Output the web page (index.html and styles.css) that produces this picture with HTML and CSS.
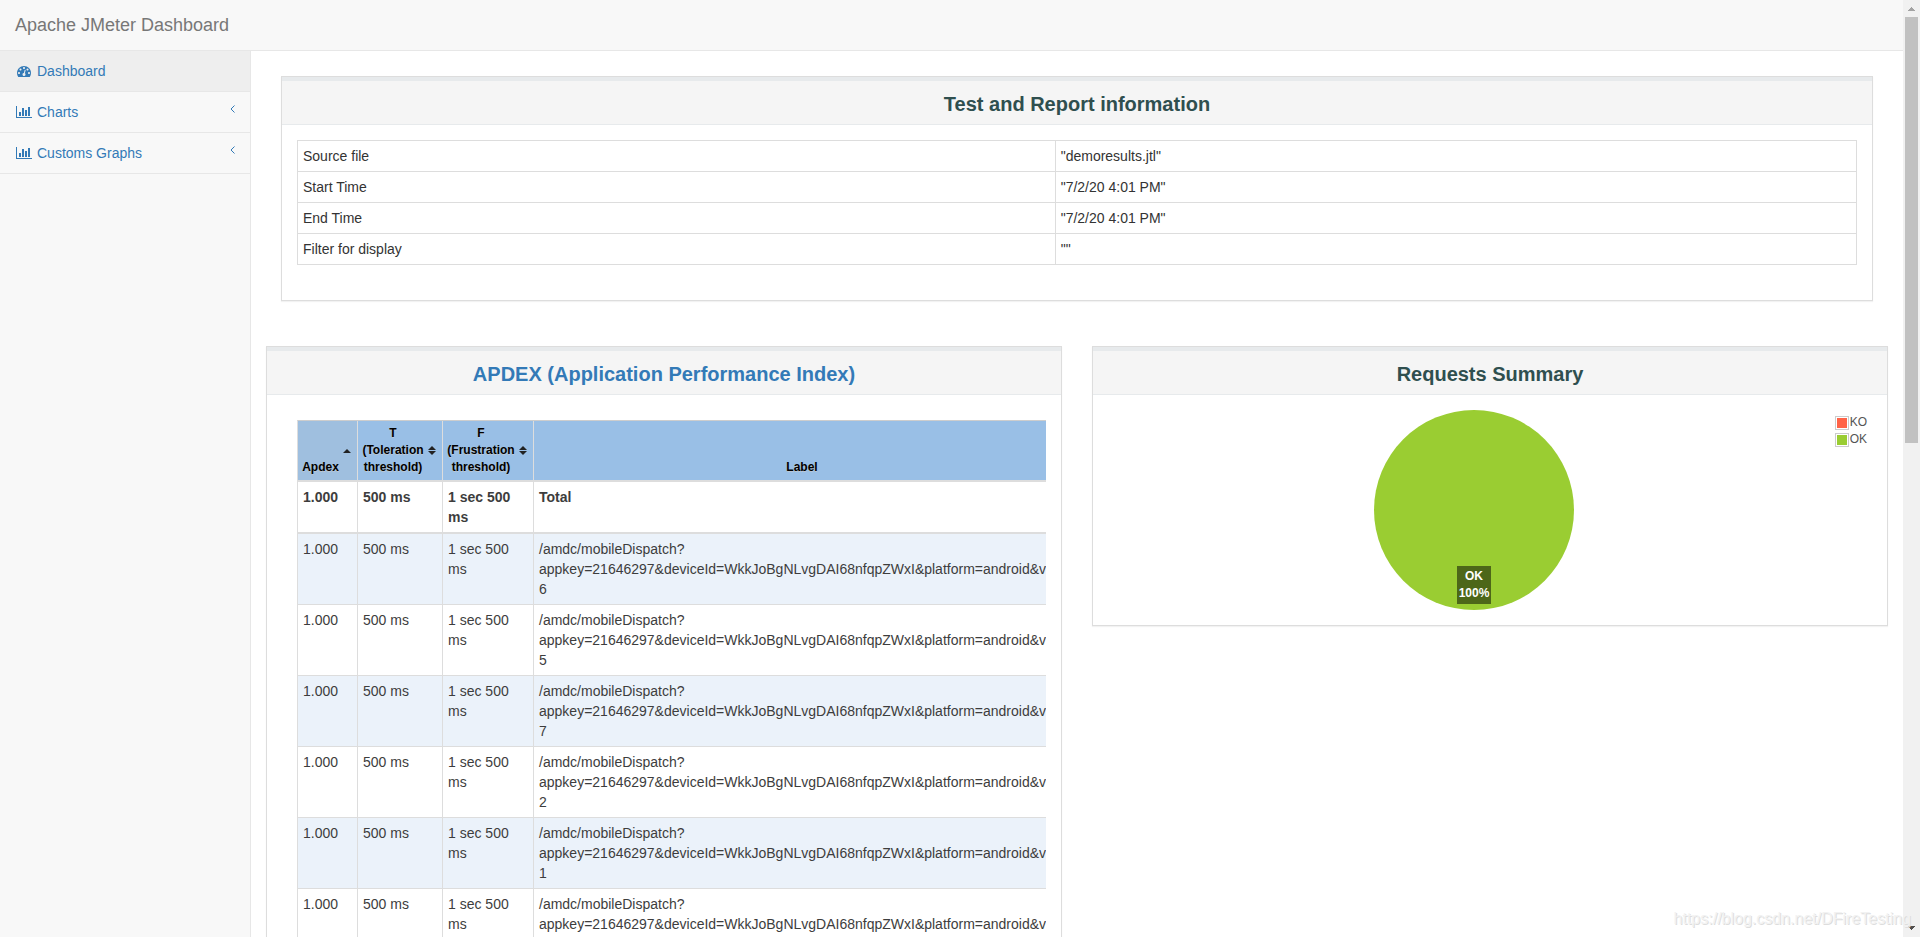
FILE: index.html
```html
<!DOCTYPE html>
<html lang="en">
<head>
<meta charset="utf-8">
<title>Apache JMeter Dashboard</title>
<link rel="stylesheet" href="styles.css">
</head>
<body>
<svg class="defs" aria-hidden="true">
  <symbol id="i-dashboard" viewBox="0 0 1792 1792"><path d="M384 1152q0-53-37.5-90.5t-90.5-37.5-90.5 37.5-37.5 90.5 37.5 90.5 90.5 37.5 90.5-37.5 37.5-90.5zm192-448q0-53-37.5-90.5t-90.5-37.5-90.5 37.5-37.5 90.5 37.5 90.5 90.5 37.5 90.5-37.5 37.5-90.5zm428 481l101-382q6-26-7.5-48.5t-38.5-29.5-48 6.5-30 39.5l-101 382q-60 5-107 43.5t-63 98.5q-20 77 20 146t117 89 146-20 89-117q16-60-6-117t-72-91zm660-33q0-53-37.5-90.5t-90.5-37.5-90.5 37.5-37.5 90.5 37.5 90.5 90.5 37.5 90.5-37.5 37.5-90.5zm-640-640q0-53-37.5-90.5t-90.5-37.5-90.5 37.5-37.5 90.5 37.5 90.5 90.5 37.5 90.5-37.5 37.5-90.5zm448 192q0-53-37.5-90.5t-90.5-37.5-90.5 37.5-37.5 90.5 37.5 90.5 90.5 37.5 90.5-37.5 37.5-90.5zm320 448q0 261-141 483-19 29-54 29h-1402q-35 0-54-29-141-221-141-483 0-182 71-348t191-286 286-191 348-71 348 71 286 191 191 286 71 348z"/></symbol>
  <symbol id="i-chart" viewBox="0 0 2048 1792"><path d="M640 896v512h-256v-512h256zm384-512v1024h-256v-1024h256zm1024 1152v128h-2048v-1536h128v1408h1920zm-640-896v768h-256v-768h256zm384-384v1152h-256v-1152h256z"/></symbol>
  <symbol id="i-angle" viewBox="0 0 5 8"><path d="M4.5 .5L1 4l3.500 3.500" fill="none" stroke="currentColor"/></symbol>
  <symbol id="i-asc" viewBox="0 0 8 10"><path d="M0 7l4-4 4 4z"/></symbol>
  <symbol id="i-both" viewBox="0 0 8 10"><path d="M0 4l4-4 4 4zM0 5l4 4 4-4z"/></symbol>
</svg>
<div class="window">
  <div class="page">
    <header class="navbar"><a class="brand" href="#">Apache JMeter Dashboard</a></header>
    <div class="columns">
      <nav class="sidebar">
        <a class="item active" href="#"><svg class="icon"><use href="#i-dashboard"/></svg>Dashboard</a>
        <a class="item" href="#"><svg class="icon wide"><use href="#i-chart"/></svg>Charts<svg class="angle"><use href="#i-angle"/></svg></a>
        <a class="item" href="#"><svg class="icon wide"><use href="#i-chart"/></svg>Customs Graphs<svg class="angle"><use href="#i-angle"/></svg></a>
      </nav>
      <main class="content">
        <section class="panel info">
          <h2 class="title">Test and Report information</h2>
          <div class="body">
            <table class="details">
              <tbody>
                <tr><td class="key">Source file</td><td>"demoresults.jtl"</td></tr>
                <tr><td class="key">Start Time</td><td>"7/2/20 4:01 PM"</td></tr>
                <tr><td class="key">End Time</td><td>"7/2/20 4:01 PM"</td></tr>
                <tr><td class="key">Filter for display</td><td>""</td></tr>
              </tbody>
            </table>
          </div>
        </section>
        <div class="row">
          <section class="panel">
            <h2 class="title"><a href="#">APDEX (Application Performance Index)</a></h2>
            <div class="body">
              <div class="scroller">
                <table class="apdex">
                  <colgroup><col class="c-apdex"><col class="c-t"><col class="c-f"><col class="c-label"></colgroup>
                  <thead>
                    <tr>
                      <th class="sort sorted">Apdex<svg class="arrow"><use href="#i-asc"/></svg></th>
                      <th class="sort">T (Toleration threshold)<svg class="arrow"><use href="#i-both"/></svg></th>
                      <th class="sort">F (Frustration threshold)<svg class="arrow"><use href="#i-both"/></svg></th>
                      <th>Label</th>
                    </tr>
                  </thead>
                  <tbody class="total">
                    <tr><td>1.000</td><td>500 ms</td><td>1 sec 500 ms</td><td>Total</td></tr>
                  </tbody>
                  <tbody class="rows">
                    <tr><td>1.000</td><td>500 ms</td><td>1 sec 500 ms</td><td>/amdc/mobileDispatch?<br>appkey=21646297&amp;deviceId=WkkJoBgNLvgDAI68nfqpZWxI&amp;platform=android&amp;v<br>6</td></tr>
                    <tr><td>1.000</td><td>500 ms</td><td>1 sec 500 ms</td><td>/amdc/mobileDispatch?<br>appkey=21646297&amp;deviceId=WkkJoBgNLvgDAI68nfqpZWxI&amp;platform=android&amp;v<br>5</td></tr>
                    <tr><td>1.000</td><td>500 ms</td><td>1 sec 500 ms</td><td>/amdc/mobileDispatch?<br>appkey=21646297&amp;deviceId=WkkJoBgNLvgDAI68nfqpZWxI&amp;platform=android&amp;v<br>7</td></tr>
                    <tr><td>1.000</td><td>500 ms</td><td>1 sec 500 ms</td><td>/amdc/mobileDispatch?<br>appkey=21646297&amp;deviceId=WkkJoBgNLvgDAI68nfqpZWxI&amp;platform=android&amp;v<br>2</td></tr>
                    <tr><td>1.000</td><td>500 ms</td><td>1 sec 500 ms</td><td>/amdc/mobileDispatch?<br>appkey=21646297&amp;deviceId=WkkJoBgNLvgDAI68nfqpZWxI&amp;platform=android&amp;v<br>1</td></tr>
                    <tr><td>1.000</td><td>500 ms</td><td>1 sec 500 ms</td><td>/amdc/mobileDispatch?<br>appkey=21646297&amp;deviceId=WkkJoBgNLvgDAI68nfqpZWxI&amp;platform=android&amp;v</td></tr>
                  </tbody>
                </table>
              </div>
            </div>
          </section>
          <section class="panel">
            <h2 class="title">Requests Summary</h2>
            <div class="body summary">
              <div class="pie"><div class="slice-label">OK<br>100%</div></div>
              <ul class="legend">
                <li><span class="swatch ko"></span>KO</li>
                <li><span class="swatch ok"></span>OK</li>
              </ul>
            </div>
          </section>
        </div>
      </main>
    </div>
  </div>
  <div class="scrollbar">
    <svg class="up" viewBox="0 0 17 17"><path d="M5 11h7v-1h-1v-1h-1v-1h-1v-1h-1v1h-1v1h-1v1h-1z"/></svg>
    <div class="track"><div class="thumb"></div></div>
    <svg class="down" viewBox="0 0 17 17"><path d="M5 6h7v1h-1v1h-1v1h-1v1h-1v-1h-1v-1h-1v-1h-1z"/></svg>
  </div>
  <div class="watermark">https://blog.csdn.net/DFireTesting</div>
</div>
</body>
</html>
```
FILE: styles.css
```css
* { box-sizing: border-box; }

body {
  margin: 0;
  font: 14px/20px "Liberation Sans", Arial, sans-serif;
  color: #333;
  background: #fff;
}

a { color: #337ab7; text-decoration: none; }

.defs { position: absolute; width: 0; height: 0; }

.window {
  position: relative;
  display: grid;
  grid-template-columns: minmax(0, 1fr) 17px;
  height: 100vh;
  overflow: hidden;
}

.page {
  display: flex;
  flex-direction: column;
  min-height: 0;
  overflow: hidden;
}

.navbar {
  flex: none;
  padding: 15px;
  background: #f8f8f8;
  border-bottom: 1px solid #e7e7e7;
}
.brand { display: block; font-size: 18px; color: #777; }

.columns { flex: 1; display: flex; min-height: 0; }

/* Sidebar */
.sidebar {
  flex: none;
  width: 251px;
  background: #f8f8f8;
  border-right: 1px solid #e7e7e7;
}
.item {
  display: flex;
  align-items: center;
  padding: 10px 15px;
  border-bottom: 1px solid #e7e7e7;
}
.item.active { background: #eee; }
.icon { width: 14px; height: 14px; margin: 0 6px 0 2px; fill: currentColor; }
.icon.wide { width: 16px; margin: 0 5px 0 1px; }
.angle { width: 5px; height: 8px; margin: 0 0 6px auto; }

/* Content */
.content { flex: 1; min-width: 0; padding: 25px 15px 0; }
.panel {
  min-width: 0;
  background: #fff;
  border: 1px solid #ddd;
  box-shadow: 0 1px 1px rgba(0, 0, 0, .05);
}
.panel.info { margin: 0 15px 45px; }
.title {
  margin: 0;
  padding: 12px 15px 9px;
  font-size: 20px;
  line-height: 22px;
  text-align: center;
  color: #2f4f4f;
  background: #f5f5f5;
  border-top: 4px solid #e7eaec;
  border-bottom: 1px solid #e7eaec;
}
.body { padding: 15px; }

.details {
  width: 100%;
  margin-bottom: 20px;
  table-layout: fixed;
  border-collapse: collapse;
}
.details td { padding: 5px; border: 1px solid #ddd; }
.details .key { width: 48.6%; }

.row {
  display: grid;
  grid-template-columns: repeat(2, minmax(0, 1fr));
  gap: 30px;
  align-items: start;
}

/* Apdex table */
.scroller { padding: 10px 0 0 15px; overflow: hidden; }
.apdex {
  table-layout: fixed;
  width: 774px;
  border-spacing: 0;
  border-left: 1px solid #ddd;
  border-top: 1px solid #cdcdcd;
}
.c-apdex { width: 60px; }
.c-t { width: 85px; }
.c-f { width: 91px; }
.apdex th {
  position: relative;
  padding: 4px;
  font-size: 12px;
  line-height: 17px;
  vertical-align: bottom;
  color: #000;
  background: #99bfe6;
  border-right: 1px solid #ddd;
  border-bottom: 2px solid #ddd;
  text-shadow: 0 1px 0 rgba(204, 204, 204, .7);
}
.apdex .sort { padding-right: 18px; }
.apdex .sorted { background: #9fbfdf; }
.arrow {
  position: absolute;
  right: 6px;
  top: calc(50% - 5px);
  width: 8px;
  height: 10px;
  fill: #222;
}
.apdex td {
  padding: 5px;
  vertical-align: top;
  color: #3d3d3d;
  border-right: 1px solid #ddd;
  border-bottom: 1px solid #ddd;
}
.apdex .total td { font-weight: bold; border-bottom-width: 2px; }
.rows tr:nth-child(odd) td { background: #ebf2fa; }

/* Requests summary */
.summary { display: flex; position: relative; justify-content: center; padding-right: 47px; }
.pie {
  display: flex;
  align-items: flex-end;
  justify-content: center;
  width: 200px;
  height: 200px;
  padding-bottom: 6px;
  border-radius: 50%;
  background: #9acd32;
}
.slice-label {
  padding: 2px;
  font-size: 12px;
  line-height: 17px;
  font-weight: bold;
  text-align: center;
  color: #fff;
  background: #4d6719;
}
.legend {
  position: absolute;
  top: 19px;
  right: 20px;
  margin: 0;
  padding: 0;
  list-style: none;
  font-size: 12px;
  line-height: 17px;
  color: #545454;
}
.legend li { display: flex; align-items: center; gap: 1px; }
.swatch {
  width: 14px;
  height: 14px;
  padding: 1px;
  border: 1px solid #ccc;
  background-clip: content-box;
}
.swatch.ko { background-color: #ff6347; }
.swatch.ok { background-color: #9acd32; }

/* Scrollbar */
.scrollbar { display: flex; flex-direction: column; background: #f1f1f1; }
.up, .down { flex: none; width: 17px; height: 17px; shape-rendering: crispEdges; }
.up { fill: #a3a3a3; }
.down { fill: #505050; }
.track { flex: 1; padding: 0 2px; }
.thumb { height: 47.2%; background: #c1c1c1; }

.watermark {
  position: absolute;
  right: 9px;
  bottom: 8px;
  font-size: 16px;
  line-height: 20px;
  color: #f2f2f2;
  text-shadow: 1px 1px 0 #ddd;
}
```
